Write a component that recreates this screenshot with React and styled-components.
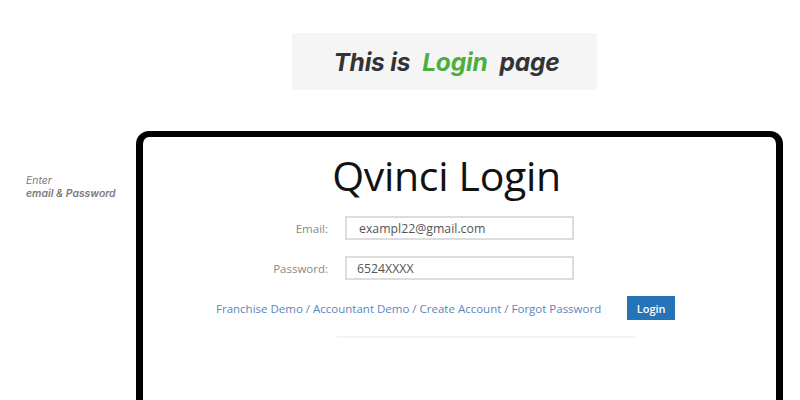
import React from "react";
import styled, { createGlobalStyle } from "styled-components";

const GlobalStyle = createGlobalStyle`
  html, body {
    margin: 0;
    padding: 0;
    background: #ffffff;
    overflow: hidden;
  }
  body {
    font-family: "Open Sans", "Liberation Sans", sans-serif;
  }
`;

const Page = styled.div`
  width: 800px;
  height: 400px;
  display: flex;
  flex-direction: column;
  padding-top: 33px;
  box-sizing: border-box;
  overflow: hidden;
`;

const Banner = styled.div`
  flex-shrink: 0;
  width: 305px;
  height: 57px;
  margin-left: 292px;
  padding-left: 4px;
  box-sizing: border-box;
  background: #f5f5f5;
  display: flex;
  align-items: center;
  justify-content: center;
  gap: 12px;
  font-family: Inter, "Liberation Sans", sans-serif;
  font-size: 24.5px;
  font-weight: 700;
  font-style: italic;
  color: #333333;
  letter-spacing: -0.2px;
`;

const Accent = styled.span`
  color: #4caf3d;
`;

const Body = styled.div`
  flex-shrink: 0;
  width: 100%;
  display: flex;
  align-items: flex-start;
  margin-top: 41px;
`;

const Note = styled.div`
  width: 136px;
  padding: 43px 0 0 26px;
  box-sizing: border-box;
  font-family: Inter, "Liberation Sans", sans-serif;
  font-size: 10.4px;
  font-style: italic;
  line-height: 13px;
  color: #7a7a7a;
  b {
    font-weight: 600;
    display: block;
  }
`;

const Frame = styled.div`
  width: 647px;
  height: 300px;
  border: 7px solid #000;
  border-top-width: 6px;
  border-bottom: none;
  border-radius: 13px 13px 0 0;
  box-sizing: border-box;
  display: flex;
  flex-direction: column;
  align-items: flex-start;
`;

const Title = styled.h1`
  align-self: stretch;
  margin: 11px 26px 0 0;
  text-align: center;
  font-family: "Open Sans", sans-serif;
  font-weight: 400;
  font-size: 41px;
  line-height: 54px;
  color: #111;
  letter-spacing: -0.3px;
`;

const Form = styled.div`
  margin: 14px 0 0 73px;
  display: grid;
  grid-template-columns: 112px 229px;
  column-gap: 17px;
  row-gap: 16px;
  align-items: center;
`;

const Label = styled.label`
  text-align: right;
  font-size: 11.5px;
  color: #888;
`;

const Input = styled.div`
  height: 24px;
  border: 2px solid #dcdcdc;
  box-sizing: border-box;
  padding-left: ${(p) => p.$pad}px;
  display: flex;
  align-items: center;
  font-size: 12.3px;
  color: #555;
`;

const Actions = styled.div`
  margin: 16px 0 0 73px;
  display: flex;
  align-items: center;
  gap: 26px;
`;

const Links = styled.div`
  font-size: 11.5px;
  color: #5a85bd;
  a {
    color: inherit;
    text-decoration: none;
  }
`;

const Button = styled.button`
  width: 48px;
  height: 24px;
  border: none;
  background: #2674b8;
  color: #fff;
  font-family: "Open Sans", sans-serif;
  font-size: 11px;
  font-weight: 600;
  padding: 0;
`;

const Rule = styled.div`
  width: 299px;
  height: 2px;
  background: #f3f3f3;
  margin: 16px 0 0 194px;
`;

export default function App() {
  return (
    <>
      <GlobalStyle />
      <Page>
        <Banner>
          <span>This is</span>
          <Accent>Login</Accent>
          <span>page</span>
        </Banner>
        <Body>
          <Note>
            Enter
            <b>email &amp; Password</b>
          </Note>
          <Frame>
            <Title>Qvinci Login</Title>
            <Form>
              <Label>Email:</Label>
              <Input $pad={12}>exampl22@gmail.com</Input>
              <Label>Password:</Label>
              <Input $pad={10}>6524XXXX</Input>
            </Form>
            <Actions>
              <Links>
                <a href="#">Franchise Demo</a> / <a href="#">Accountant Demo</a> /{" "}
                <a href="#">Create Account</a> / <a href="#">Forgot Password</a>
              </Links>
              <Button>Login</Button>
            </Actions>
            <Rule />
          </Frame>
        </Body>
      </Page>
    </>
  );
}
